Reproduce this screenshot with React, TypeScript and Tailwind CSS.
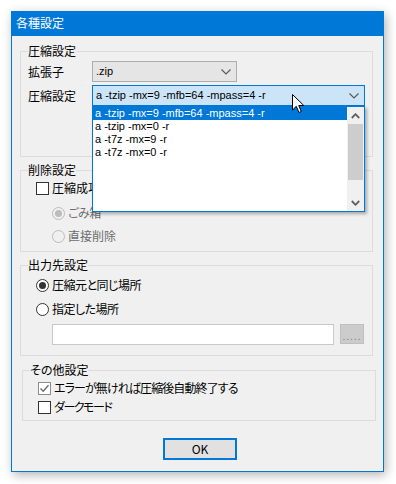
import React from "react";

const font = "font-['Noto_Sans_CJK_JP','Noto_Sans',sans-serif] [font-feature-settings:'palt']";
const latin = "font-['Liberation_Sans','Noto_Sans_CJK_JP',sans-serif] text-[11px]";

const Chevron = ({ className = "" }: { className?: string }) => (
  <svg width="10" height="6" viewBox="0 0 10 6" className={className}>
    <path d="M0.5 0.5 L5 5 L9.5 0.5" fill="none" stroke="#5a5a5a" strokeWidth="1.2" />
  </svg>
);

const Checkbox = ({ checked = false }: { checked?: boolean }) => (
  <span
    className={`w-[13px] h-[13px] shrink-0 border bg-white flex items-center justify-center ${
      checked ? "border-[#8c8c8c]" : "border-[#333333]"
    }`}
  >
    {checked && (
      <svg width="11" height="11" viewBox="0 0 11 11">
        <path d="M1.5 5.5 L4.2 8.3 L9.5 2.2" fill="none" stroke="#6e6e6e" strokeWidth="1.4" />
      </svg>
    )}
  </span>
);

const Radio = ({ checked = false, disabled = false }: { checked?: boolean; disabled?: boolean }) => (
  <span
    className={`w-[13px] h-[13px] shrink-0 rounded-full border flex items-center justify-center ${
      disabled ? "border-[#bcbcbc] bg-[#f0f0f0]" : "border-[#333333] bg-white"
    }`}
  >
    {checked && (
      <span className={`w-[7px] h-[7px] rounded-full ${disabled ? "bg-[#bcbcbc]" : "bg-[#333333]"}`} />
    )}
  </span>
);

const Group = ({
  title,
  className,
  children,
}: {
  title: string;
  className: string;
  children: React.ReactNode;
}) => (
  <fieldset className={`border border-[#dcdcdc] px-[7px] min-w-0 ${className}`}>
    <legend className="px-0 leading-[16px] text-[12px]">{title}</legend>
    {children}
  </fieldset>
);

const listItems = [
  "a -tzip -mx=9 -mfb=64 -mpass=4 -r",
  "a -tzip -mx=0 -r",
  "a -t7z -mx=9 -r",
  "a -t7z -mx=0 -r",
];

export default function App() {
  return (
    <div className={`w-[396px] h-[484px] bg-white pt-[11px] pl-[11px] text-black ${font}`}>
      <div className="w-[373px] h-[461px] border border-[#0078d7] bg-[#f0f0f0] shadow-[2px_3px_10px_rgba(0,0,0,0.3)] flex flex-col">
        <div className="h-[24px] bg-[#0078d7] text-white text-[12px] leading-[22px] pl-[4px] shrink-0">
          各種設定
        </div>

        <Group title="圧縮設定" className="mt-[7px] ml-[8px] mr-[10px] h-[114px]">
          <div className="pt-[2px] text-[12px]">
            <div className="flex items-center h-[21px]">
              <span className="w-[64px]">拡張子</span>
              <div className="w-[145px] h-[21px] bg-[#e5e5e5] border border-[#adadad] flex items-center pl-[3px] pr-[5px] leading-[19px]">
                <span className={`flex-1 ${latin}`}>.zip</span>
                <Chevron />
              </div>
            </div>
            <div className="flex items-center h-[21px] mt-[3px]">
              <span className="w-[64px]">圧縮設定</span>
              <div className="relative w-[273px] h-[21px] bg-[#cce4f7] border border-[#0078d7] flex items-center pl-[3px] pr-[5px] leading-[19px]">
                <span className={`flex-1 ${latin}`}>{listItems[0]}</span>
                <Chevron />
                <div className="absolute left-[-1px] top-[20px] w-[273px] h-[106px] bg-white border border-[#0078d7] shadow-[2px_2px_3px_rgba(0,0,0,0.3)] flex z-10">
                  <div className={`flex-1 flex flex-col ${latin}`}>
                    {listItems.map((t, i) => (
                      <div
                        key={t}
                        className={`h-[13px] leading-[13px] pl-[2px] ${
                          i === 0 ? "bg-[#0078d7] text-white" : ""
                        }`}
                      >
                        {t}
                      </div>
                    ))}
                  </div>
                  <div className="w-[17px] bg-[#f0f0f0] flex flex-col">
                    <div className="h-[17px] flex items-center justify-center">
                      <svg width="9" height="6" viewBox="0 0 9 6">
                        <path d="M0.8 5 L4.5 1.2 L8.2 5" fill="none" stroke="#606060" strokeWidth="1.8" />
                      </svg>
                    </div>
                    <div className="h-[56px] mx-[1px] bg-[#cdcdcd]" />
                    <div className="flex-1" />
                    <div className="h-[17px] flex items-center justify-center">
                      <svg width="9" height="6" viewBox="0 0 9 6">
                        <path d="M0.8 1 L4.5 4.8 L8.2 1" fill="none" stroke="#606060" strokeWidth="1.8" />
                      </svg>
                    </div>
                  </div>
                </div>
                <svg
                  width="13"
                  height="20"
                  viewBox="0 0 13 20"
                  className="absolute left-[199px] top-[8px] z-20"
                >
                  <path
                    d="M0.5 0.5 L0.5 16 L4.3 12.3 L7 18.5 L9.3 17.5 L6.7 11.5 L11.8 11.5 Z"
                    fill="white"
                    stroke="black"
                    strokeWidth="1"
                  />
                </svg>
              </div>
            </div>
          </div>
        </Group>

        <Group title="削除設定" className="mt-[5px] ml-[8px] mr-[10px] h-[90px]">
          <div className="pt-[2px] text-[12px] leading-[16px]">
            <div className="flex items-center h-[16px] pl-[8px] gap-[3px]">
              <Checkbox />
              <span>圧縮成功時に元ファイルを削除する</span>
            </div>
            <div className="flex items-center h-[16px] pl-[24px] gap-[3px] mt-[9px] text-[#6d6d6d]">
              <Radio checked disabled />
              <span className="tracking-[-0.5px]">ごみ箱</span>
            </div>
            <div className="flex items-center h-[16px] pl-[24px] gap-[3px] mt-[7px] text-[#6d6d6d]">
              <Radio disabled />
              <span>直接削除</span>
            </div>
          </div>
        </Group>

        <Group title="出力先設定" className="mt-[5px] ml-[8px] mr-[10px] h-[99px]">
          <div className="pt-[4px] text-[12px] leading-[16px]">
            <div className="flex items-center h-[16px] pl-[8px] gap-[3px]">
              <Radio checked />
              <span className="tracking-[-0.5px]">圧縮元と同じ場所</span>
            </div>
            <div className="flex items-center h-[16px] pl-[8px] gap-[3px] mt-[8px]">
              <Radio />
              <span className="tracking-[-0.5px]">指定した場所</span>
            </div>
            <div className="flex items-start pl-[24px] mt-[7px]">
              <div className="w-[282px] h-[21px] bg-white border border-[#c8c8c8]" />
              <div className="ml-[6px] w-[24px] h-[20px] bg-[#cccccc] border border-[#bfbfbf] flex items-end justify-center pb-[3px]">
                <span className="text-[10px] leading-[8px] text-[#838383] tracking-[1px]">.....</span>
              </div>
            </div>
          </div>
        </Group>

        <Group title="その他設定" className="mt-[6px] ml-[10px] mr-[7px] h-[59px]">
          <div className="pt-[2px] text-[12px] leading-[16px]">
            <div className="flex items-center h-[16px] pl-[8px] gap-[3px]">
              <Checkbox checked />
              <span className="tracking-[-0.9px]">エラーが無ければ圧縮後自動終了する</span>
            </div>
            <div className="flex items-center h-[16px] pl-[8px] gap-[3px] mt-[3px]">
              <Checkbox />
              <span className="tracking-[-1.5px]">ダークモード</span>
            </div>
          </div>
        </Group>

        <div className="mt-[17px] ml-[151px] w-[74px] h-[22px] border-2 border-[#0078d7] bg-[#e1e1e1] flex items-center justify-center text-[12px] leading-[16px]">
          OK
        </div>
      </div>
    </div>
  );
}
